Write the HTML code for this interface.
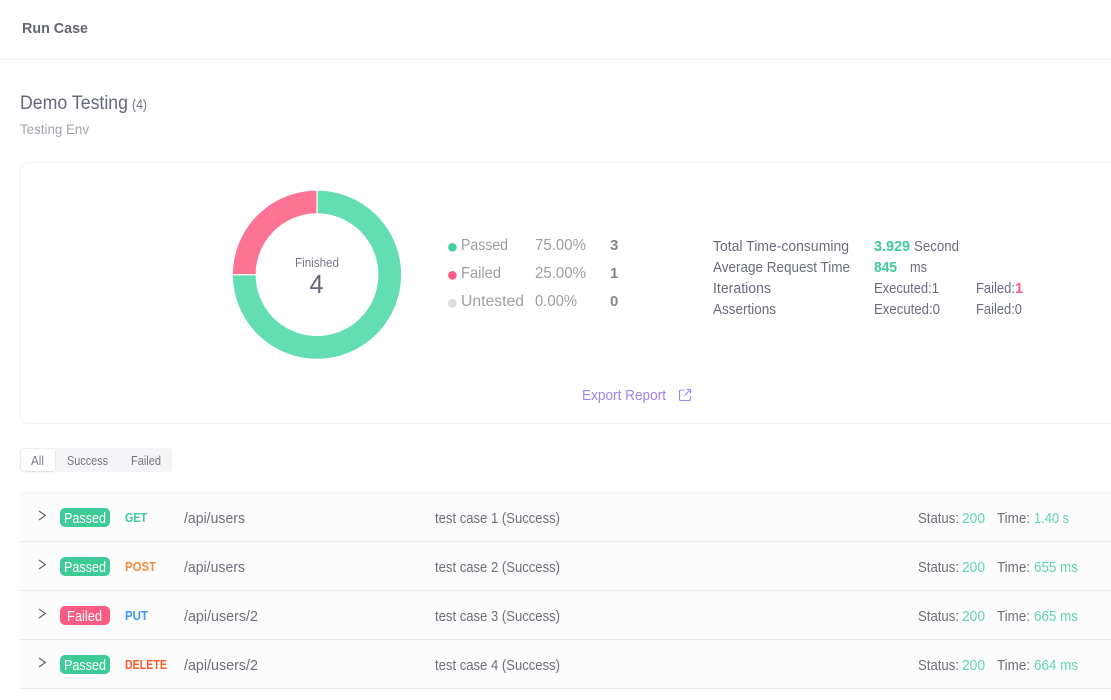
<!DOCTYPE html>
<html lang="en"><head><meta charset="utf-8"><title>Run Case</title>
<style>
html,body{margin:0;padding:0;background:#fff;width:1111px;height:700px;overflow:hidden}
svg{display:block;position:absolute;left:0;top:0}
text{font-family:"Liberation Sans",sans-serif;font-size:14.5px;fill:#666a76}
.b{font-weight:700}
.g{fill:#3fcb98}.s{fill:#5fd5ab}
.m{font-size:13px;font-weight:700}
.t{fill:#6c6f79}
.l{font-size:16px;fill:#9c9da3}
.c{font-size:15px;font-weight:700;fill:#85868b}
.k{fill:#6a6d7a}
.w{fill:#fff}
</style></head><body>
<svg width="1111" height="700" viewBox="0 0 1111 700" xmlns="http://www.w3.org/2000/svg">
<defs><filter id="sh" x="-20%" y="-20%" width="140%" height="150%"><feDropShadow dx="0" dy="0.5" stdDeviation="1" flood-color="#000" flood-opacity=".14"/></filter></defs>
<rect x="0" y="59" width="1111" height="1" fill="#f1f1f4"/>
<text x="22" y="33" textLength="66" lengthAdjust="spacingAndGlyphs" style="font-size:15px;font-weight:700;fill:#62656f">Run Case</text>
<text x="20" y="109" textLength="108" lengthAdjust="spacingAndGlyphs" style="font-size:19px;fill:#646878">Demo Testing</text>
<text x="132" y="109" textLength="15" lengthAdjust="spacingAndGlyphs" style="font-size:14px;fill:#70737f">(4)</text>
<text x="20" y="134" textLength="69" lengthAdjust="spacingAndGlyphs" style="font-size:14px;fill:#a2a4ac">Testing Env</text>

<rect x="20.5" y="162.5" width="1110" height="261" rx="8" fill="#fff" stroke="#f2f2f5"/>

<path d="M317 190A84.7 84.7 0 1 1 232.3 274.7L256.2 274.7A60.8 60.8 0 1 0 317 213.9Z" fill="#63deb0" stroke="#fff" stroke-width="1.2"/>
<path d="M232.3 274.7A84.7 84.7 0 0 1 317 190L317 213.9A60.8 60.8 0 0 0 256.2 274.7Z" fill="#fd7394" stroke="#fff" stroke-width="1.2"/>
<text x="295" y="267" textLength="44" lengthAdjust="spacingAndGlyphs" style="font-size:12.5px;fill:#747783">Finished</text>
<text x="309.5" y="293" textLength="14" lengthAdjust="spacingAndGlyphs" style="font-size:26px;fill:#626676">4</text>

<circle cx="452.4" cy="247.3" r="4.3" fill="#3fd69c"/>
<circle cx="452.4" cy="275.3" r="4.3" fill="#fc5c83"/>
<circle cx="452.4" cy="303.3" r="4.3" fill="#dcdcde"/>
<text class="l" x="461" y="250" textLength="47" lengthAdjust="spacingAndGlyphs">Passed</text>
<text class="l" x="461" y="278" textLength="40" lengthAdjust="spacingAndGlyphs">Failed</text>
<text class="l" x="461" y="306" textLength="63" lengthAdjust="spacingAndGlyphs">Untested</text>
<text class="l" x="535" y="250" textLength="51" lengthAdjust="spacingAndGlyphs">75.00%</text>
<text class="l" x="535" y="278" textLength="51" lengthAdjust="spacingAndGlyphs">25.00%</text>
<text class="l" x="535" y="306" textLength="42" lengthAdjust="spacingAndGlyphs">0.00%</text>
<text class="c" x="610" y="250">3</text>
<text class="c" x="610" y="278">1</text>
<text class="c" x="610" y="306">0</text>

<text class="k" x="713" y="251" textLength="136" lengthAdjust="spacingAndGlyphs">Total Time-consuming</text>
<text class="k" x="713" y="272" textLength="137" lengthAdjust="spacingAndGlyphs">Average Request Time</text>
<text class="k" x="713" y="293" textLength="58" lengthAdjust="spacingAndGlyphs">Iterations</text>
<text class="k" x="713" y="314" textLength="63" lengthAdjust="spacingAndGlyphs">Assertions</text>
<text class="b g" x="874" y="251" textLength="36" lengthAdjust="spacingAndGlyphs">3.929</text>
<text class="k" x="914" y="251" textLength="45" lengthAdjust="spacingAndGlyphs">Second</text>
<text class="b g" x="874" y="272" textLength="23" lengthAdjust="spacingAndGlyphs">845</text>
<text class="k" x="910" y="272" textLength="17" lengthAdjust="spacingAndGlyphs">ms</text>
<text class="k" x="874" y="293" textLength="65" lengthAdjust="spacingAndGlyphs">Executed:1</text>
<text class="k" x="976" y="293" textLength="39" lengthAdjust="spacingAndGlyphs">Failed:</text>
<text class="b" x="1015" y="293" style="fill:#fc5c83">1</text>
<text class="k" x="874" y="314" textLength="66" lengthAdjust="spacingAndGlyphs">Executed:0</text>
<text class="k" x="976" y="314" textLength="46" lengthAdjust="spacingAndGlyphs">Failed:0</text>

<text x="582" y="400" textLength="84" lengthAdjust="spacingAndGlyphs" style="fill:#a283f0">Export Report</text>
<path d="M684 390H681A1.5 1.5 0 0 0 679.5 391.5V399A1.5 1.5 0 0 0 681 400.5H689A1.5 1.5 0 0 0 690.5 399V396M684.5 395.5L690.5 389.5M686.5 389.5H690.5V393.5" fill="none" stroke="#a283f0" stroke-width="1.1"/>

<rect x="20" y="448" width="152" height="24" rx="4" fill="#f5f5f7"/>
<rect x="21" y="449" width="34" height="22" rx="3" fill="#fff" filter="url(#sh)"/>
<text x="31" y="465" textLength="13" lengthAdjust="spacingAndGlyphs" style="font-size:12.5px;fill:#7b7e88">All</text>
<text x="67" y="465" textLength="41" lengthAdjust="spacingAndGlyphs" style="font-size:12.5px;fill:#747781">Success</text>
<text x="131" y="465" textLength="30" lengthAdjust="spacingAndGlyphs" style="font-size:12.5px;fill:#747781">Failed</text>

<rect x="20" y="492" width="1091" height="197" fill="#fcfcfc"/>
<rect x="20" y="492" width="1091" height="1" fill="#f5f5f7"/>
<rect x="20" y="541" width="1091" height="1" fill="#ebebee"/>
<rect x="20" y="590" width="1091" height="1" fill="#ebebee"/>
<rect x="20" y="639" width="1091" height="1" fill="#ebebee"/>
<rect x="20" y="688" width="1091" height="1" fill="#ebebee"/>

<g fill="none" stroke="#62656f" stroke-width="1.2">
<path d="M39 511L45.3 515.5L39 520"/>
<path d="M39 560L45.3 564.5L39 569"/>
<path d="M39 609L45.3 613.5L39 618"/>
<path d="M39 658L45.3 662.5L39 667"/>
</g>

<rect x="60" y="508" width="50" height="19" rx="5" fill="#3fcb98"/>
<rect x="60" y="557" width="50" height="19" rx="5" fill="#3fcb98"/>
<rect x="60" y="606" width="50" height="19" rx="5" fill="#fc5c83"/>
<rect x="60" y="655" width="50" height="19" rx="5" fill="#3fcb98"/>
<text class="w" x="64" y="523" textLength="42" lengthAdjust="spacingAndGlyphs">Passed</text>
<text class="w" x="64" y="572" textLength="42" lengthAdjust="spacingAndGlyphs">Passed</text>
<text class="w" x="67" y="621" textLength="35" lengthAdjust="spacingAndGlyphs">Failed</text>
<text class="w" x="64" y="670" textLength="42" lengthAdjust="spacingAndGlyphs">Passed</text>

<text class="m" x="125" y="522" textLength="22" lengthAdjust="spacingAndGlyphs" style="fill:#3fcb98">GET</text>
<text class="m" x="125" y="571" textLength="31" lengthAdjust="spacingAndGlyphs" style="fill:#f58b3a">POST</text>
<text class="m" x="125" y="620" textLength="23" lengthAdjust="spacingAndGlyphs" style="fill:#3d99f0">PUT</text>
<text class="m" x="125" y="669" textLength="42" lengthAdjust="spacingAndGlyphs" style="fill:#fb5a28">DELETE</text>

<text class="t" x="184" y="523" textLength="61" lengthAdjust="spacingAndGlyphs">/api/users</text>
<text class="t" x="184" y="572" textLength="61" lengthAdjust="spacingAndGlyphs">/api/users</text>
<text class="t" x="184" y="621" textLength="74" lengthAdjust="spacingAndGlyphs">/api/users/2</text>
<text class="t" x="184" y="670" textLength="74" lengthAdjust="spacingAndGlyphs">/api/users/2</text>

<text class="t" x="435" y="523" textLength="125" lengthAdjust="spacingAndGlyphs">test case 1 (Success)</text>
<text class="t" x="435" y="572" textLength="125" lengthAdjust="spacingAndGlyphs">test case 2 (Success)</text>
<text class="t" x="435" y="621" textLength="125" lengthAdjust="spacingAndGlyphs">test case 3 (Success)</text>
<text class="t" x="435" y="670" textLength="125" lengthAdjust="spacingAndGlyphs">test case 4 (Success)</text>

<text class="t" x="918" y="523" textLength="41" lengthAdjust="spacingAndGlyphs">Status:</text>
<text class="s" x="962" y="523" textLength="23" lengthAdjust="spacingAndGlyphs">200</text>
<text class="t" x="997" y="523" textLength="33" lengthAdjust="spacingAndGlyphs">Time:</text>
<text class="s" x="1034" y="523" textLength="35" lengthAdjust="spacingAndGlyphs">1.40 s</text>

<text class="t" x="918" y="572" textLength="41" lengthAdjust="spacingAndGlyphs">Status:</text>
<text class="s" x="962" y="572" textLength="23" lengthAdjust="spacingAndGlyphs">200</text>
<text class="t" x="997" y="572" textLength="33" lengthAdjust="spacingAndGlyphs">Time:</text>
<text class="s" x="1034" y="572" textLength="44" lengthAdjust="spacingAndGlyphs">655 ms</text>

<text class="t" x="918" y="621" textLength="41" lengthAdjust="spacingAndGlyphs">Status:</text>
<text class="s" x="962" y="621" textLength="23" lengthAdjust="spacingAndGlyphs">200</text>
<text class="t" x="997" y="621" textLength="33" lengthAdjust="spacingAndGlyphs">Time:</text>
<text class="s" x="1034" y="621" textLength="44" lengthAdjust="spacingAndGlyphs">665 ms</text>

<text class="t" x="918" y="670" textLength="41" lengthAdjust="spacingAndGlyphs">Status:</text>
<text class="s" x="962" y="670" textLength="23" lengthAdjust="spacingAndGlyphs">200</text>
<text class="t" x="997" y="670" textLength="33" lengthAdjust="spacingAndGlyphs">Time:</text>
<text class="s" x="1034" y="670" textLength="44" lengthAdjust="spacingAndGlyphs">664 ms</text>
</svg>
</body></html>
